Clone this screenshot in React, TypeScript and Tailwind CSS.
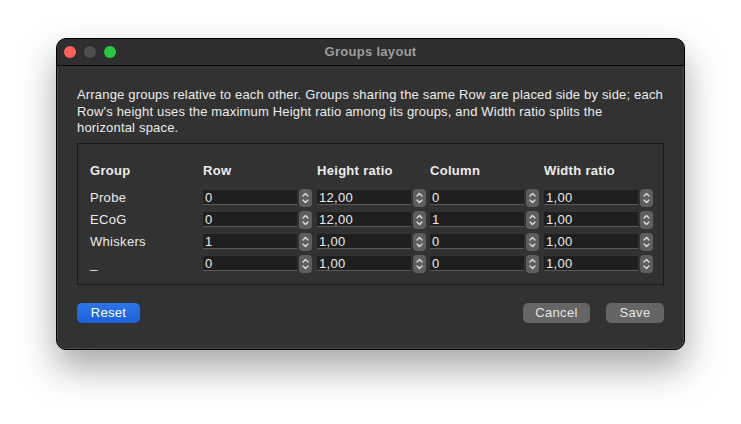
import React from 'react';

type GroupRow = {
  name: string;
  row: string;
  height: string;
  column: string;
  width: string;
};

const rows: GroupRow[] = [
  { name: 'Probe', row: '0', height: '12,00', column: '0', width: '1,00' },
  { name: 'ECoG', row: '0', height: '12,00', column: '1', width: '1,00' },
  { name: 'Whiskers', row: '1', height: '1,00', column: '0', width: '1,00' },
  { name: '_', row: '0', height: '1,00', column: '0', width: '1,00' }
];

const intro = [
  'Arrange groups relative to each other. Groups sharing the same Row are placed side by side; each',
  "Row's height uses the maximum Height ratio among its groups, and Width ratio splits the",
  'horizontal space.'
];

const gridCols = 'grid grid-cols-[113px_114px_113px_114px_1fr]';

function Stepper() {
  return (
    <div className="flex h-[18px] w-[13px] items-center justify-center rounded-[4px] bg-[#5e5e5e]">
      <svg width="9" height="14" viewBox="0 0 9 14" aria-hidden="true">
        <path
          d="M2 5l2.5-2.5L7 5M2 9l2.5 2.5L7 9"
          stroke="#e4e4e4"
          strokeWidth="1.2"
          fill="none"
          strokeLinecap="round"
          strokeLinejoin="round"
        />
      </svg>
    </div>
  );
}

function SpinBox({ value }: { value: string }) {
  return (
    <div className="flex items-center gap-[2px]">
      <div className="flex h-[15px] w-[94px] items-center border-b border-[#5a5a5a] bg-[#1f1f1f] pl-[2px] text-[13px] leading-none text-[#ececec]">
        {value}
      </div>
      <Stepper />
    </div>
  );
}

function TrafficLights() {
  return (
    <div className="absolute left-[7px] top-[7px] flex gap-[8px]">
      <span className="h-[12px] w-[12px] rounded-full bg-[#ff5f57]" />
      <span className="h-[12px] w-[12px] rounded-full bg-[#4e4e4e]" />
      <span className="h-[12px] w-[12px] rounded-full bg-[#28c840]" />
    </div>
  );
}

export default function App() {
  return (
    <div className="h-[424px] w-[741px] bg-white pl-[56px] pt-[38px] font-['Liberation_Sans',Arial,sans-serif] tracking-[0.3px]">
      <div className="flex h-[312px] w-[629px] flex-col overflow-hidden rounded-[10px] border border-black bg-[#323232] shadow-[0_18px_36px_rgba(0,0,0,0.35),inset_0_0_0_1px_rgba(255,255,255,0.12)]">
        <div className="relative flex h-[27px] shrink-0 items-center justify-center border-b border-black bg-[#2e2e2e]">
          <TrafficLights />
          <span className="text-[13px] font-bold text-[#9d9d9d]">Groups layout</span>
        </div>

        <div className="flex flex-1 flex-col px-[20px] pt-[21px]">
          <div className="text-[13px] leading-[16.5px] tracking-[0.18px] text-[#ececec]">
            {intro.map((line) => (
              <p key={line} className="whitespace-nowrap">
                {line}
              </p>
            ))}
          </div>

          <div className="mt-[6px] h-[142px] border border-[#1a1a1a] pl-[12px] pt-[16px]">
            <div className={`${gridCols} h-[22px] items-center text-[13px] font-bold text-[#ececec]`}>
              <span>Group</span>
              <span>Row</span>
              <span>Height ratio</span>
              <span>Column</span>
              <span>Width ratio</span>
            </div>
            <div className="mt-[5px]">
              {rows.map((r) => (
                <div key={r.name} className={`${gridCols} h-[22px] items-center text-[13px] text-[#ececec]`}>
                  <span>{r.name}</span>
                  <SpinBox value={r.row} />
                  <SpinBox value={r.height} />
                  <SpinBox value={r.column} />
                  <SpinBox value={r.width} />
                </div>
              ))}
            </div>
          </div>

          <div className="mt-[18px] flex items-center">
            <button
              type="button"
              className="h-[20px] w-[63px] rounded-[5px] bg-gradient-to-b from-[#2c74ea] to-[#1c60d8] text-[13px] text-white"
            >
              Reset
            </button>
            <div className="ml-auto flex gap-[16px]">
              <button type="button" className="h-[20px] w-[67px] rounded-[5px] bg-[#656565] text-[13px] text-[#e6e6e6]">
                Cancel
              </button>
              <button type="button" className="h-[20px] w-[58px] rounded-[5px] bg-[#656565] text-[13px] text-[#e6e6e6]">
                Save
              </button>
            </div>
          </div>
        </div>
      </div>
    </div>
  );
}
